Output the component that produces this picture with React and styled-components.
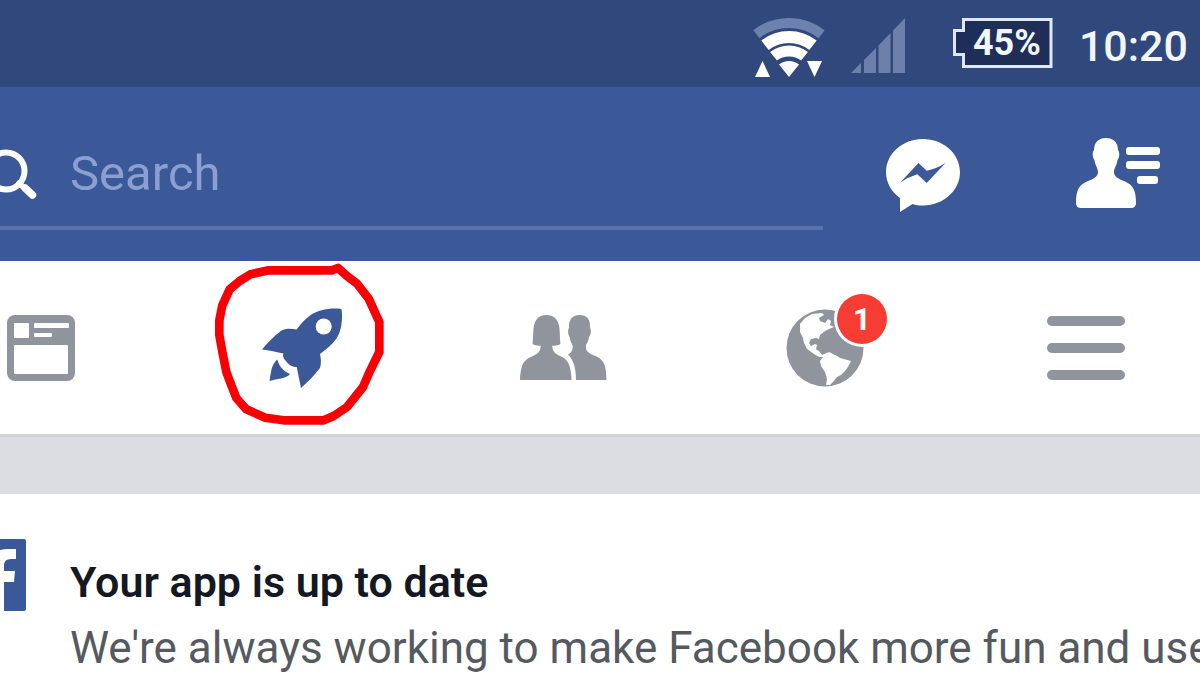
import React from 'react';
import styled, { createGlobalStyle } from 'styled-components';

const App = () => {
    return (
        <>
            <GlobalStyle />
            <Screen>
                <StatusBar>
                    <WifiIcon />
                    <SignalIcon />
                    <Battery>
                        <BatteryShape />
                        <BatteryText>45%</BatteryText>
                    </Battery>
                    <Clock>10:20</Clock>
                </StatusBar>
                <Header>
                    <SearchField>
                        <SearchIcon />
                        <SearchInput type='search' aria-label='Search' placeholder='Search' />
                    </SearchField>
                    <MessengerButton type='button' aria-label='Messenger'>
                        <MessengerIcon />
                    </MessengerButton>
                    <ContactsButton type='button' aria-label='Contacts'>
                        <ContactsIcon />
                    </ContactsButton>
                </Header>
                <Tabs>
                    <Tab type='button' aria-label='News feed'>
                        <FeedIcon />
                    </Tab>
                    <Tab type='button' aria-label='Discover' $active>
                        <RocketIcon />
                        <Marker />
                    </Tab>
                    <Tab type='button' aria-label='Friends'>
                        <FriendsIcon />
                    </Tab>
                    <Tab type='button' aria-label='Notifications'>
                        <BadgeHolder>
                            <GlobeIcon />
                            <Badge>1</Badge>
                        </BadgeHolder>
                    </Tab>
                    <Tab type='button' aria-label='Menu'>
                        <MenuIcon />
                    </Tab>
                </Tabs>
                <Divider />
                <Card>
                    <Logo />
                    <CardBody>
                        <CardTitle>Your app is up to date</CardTitle>
                        <CardText>We're always working to make Facebook more fun and use</CardText>
                    </CardBody>
                </Card>
            </Screen>
        </>
    );
};

const WifiIcon = () => (
    <Icon width='72' height='62' viewBox='0 -2 72 62' fill='#fff'>
        <path d='M3.4 17.2A53 53 0 0 1 68.6 17.2' fill='none' stroke='#6d81ae' strokeWidth='10' />
        <path d='M12 28.3A39 39 0 0 1 60 28.3' fill='none' stroke='#fff' strokeWidth='12' />
        <path d='M20.500 39.300A25 25 0 0 1 51.500 39.300' fill='none' stroke='#fff' strokeWidth='11' />
        <path d='M36 60L26 47.500A16 16 0 0 1 46 47.500Z' />
        <path d='M2 60L9.500 44L17 60Z' />
        <path d='M54 44H69L61.500 60Z' />
    </Icon>
);

const SignalIcon = () => (
    <Icon width='54' height='62' viewBox='0 -3 54 62' fill='#6d80ab'>
        <path d='M0 55L10 45V55ZM13 42L25 30V55H13ZM27.500 27.500L39.500 15V55H27.500ZM42 12.500L54 0V55H42Z' />
    </Icon>
);

const BatteryShape = () => (
    <BatterySvg width='100' height='52' viewBox='0 0 100 52' aria-hidden='true'>
        <path d='M10.500 2.500H98V49.500H10.500V37.500H1.500V13.500H10.500Z' fill='#1e2e58' stroke='#dfe8fb' strokeWidth='3' />
    </BatterySvg>
);

const SearchIcon = () => (
    <Icon width='38' height='52' viewBox='0 0 38 52' fill='none' stroke='#fff' strokeLinecap='round'>
        <circle cx='6' cy='23' r='18.500' strokeWidth='6' />
        <path d='M19 35.500L24 39.500' strokeWidth='6' />
        <path d='M25 40L32.500 47' strokeWidth='7.500' />
    </Icon>
);

const MessengerIcon = () => (
    <Icon width='74' height='78' viewBox='0 -4 74 78'>
        <path
            d='M37 0C57.400 0 74 14.800 74 33C74 51.300 57.400 66.500 37 66.500C33 66.500 29.600 66 26.500 65L14 73V59C5.400 52.900 0 43.600 0 33C0 14.800 16.600 0 37 0Z'
            fill='#fff'
        />
        <path d='M14.300 43.500L32.500 24L40.700 31.700Q50 30 59.500 24L40.700 44L31.300 35.200Q22 38 14.300 43.500Z' fill='#3b5998' />
    </Icon>
);

const ContactsIcon = () => (
    <Icon width='84' height='72' viewBox='0 0 84 72' fill='#fff'>
        <path d='M30 0C37 0 42 4 42 12C44 14 43.500 20 41.500 22C41 27 38 30 38 34C38 39 43 41 49 43.500C57 47 60 52 60 65Q60 70 55 70H5Q0 70 0 65C0 52 3 47 11 43.500C17 41 22 39 22 34C22 30 19 27 18.500 22C16.500 20 16 14 18 12C18 4 23 0 30 0Z' />
        <rect x='50' y='9' width='34' height='8' rx='3' />
        <rect x='50' y='23' width='34' height='8' rx='3' />
        <rect x='61' y='38' width='21' height='8' rx='3' />
    </Icon>
);

const FeedIcon = () => (
    <Icon width='68' height='66' viewBox='0 0 68 66' fill='currentColor'>
        <rect width='68' height='66' rx='8' />
        <g fill='#fff'>
            <rect x='7' y='8' width='15' height='15' rx='1' />
            <rect x='27' y='8' width='35' height='5' rx='1' />
            <rect x='27' y='18' width='18' height='4' rx='1' />
            <rect x='7' y='30' width='54' height='29' rx='1' />
        </g>
    </Icon>
);

const RocketIcon = () => (
    <Icon width='84' height='84' viewBox='0 0 84 84' fill='currentColor'>
        <path d='M81.500 3C70 1.500 58 4 50 9.500C44.500 13.500 40 19 36.500 23.500C31 22.500 25 22.500 21.500 24.500C14 30 8 36.500 2 43.500C9 44.500 17 46 23.500 47.500C22.500 49 23 52 25 54C28.500 58.500 31.500 61 36.700 61L41 82C48 76 54.500 69 60 62C61.500 58 61 52 60 48C66 43.500 72 39 76.500 32.500C81.500 25 83 13 81.500 3Z' />
        <circle cx='63.700' cy='20.500' r='8' fill='#fff' />
        <path d='M17.300 53.500C19 60 23 65 30 68C26 73 17 72.500 9.500 75C11 67 11 59 17.300 53.500Z' />
    </Icon>
);

const FriendsIcon = () => (
    <Icon width='88' height='66' viewBox='0 0 88 66' fill='currentColor'>
        <path d='M27.500 0C36 0 40 6 40.500 14C41 20 41 26 41.500 29C39 30.500 36 31 33.500 30.500C33 35 35 38 40 40.500C46 43 49 46 50.500 51C52 56 52.500 61 52.500 65H1C1 61 1.500 56 3 51C4.500 46 9 43 15 40.500C20 38 22 35 21.500 30.500C19 31 16 30.500 13.500 29C14 26 14 20 14.500 14C15 6 19 0 27.500 0Z' />
        <path d='M60.500 0C68 0 71.500 4 71 13C72.500 15 72 20 70 22C69.500 26 68 28 67 30C66.500 35 68 37.500 74 40C83 43.500 87.500 47 87.500 65H57C57 55 55 45 49 39.500C53 37 54 35 53.500 30C52.500 28 51 26 50.700 22C49 20 48.500 15 50 13C49.500 5 53 0 60.500 0Z' />
    </Icon>
);

const GlobeIcon = () => (
    <Icon width='78' height='78' viewBox='0 0 78 78' fill='currentColor'>
        <circle cx='39' cy='39' r='38.500' />
        <path
            d='M14 15L19 9L26 5L36 4L38 6L33 9L34 12L39 14L42 10L45 12L44 16L48 18L43 20L39 22L34 26L33 30L30 29L25 30L23 34L25 37L29 35L31 36L30 40L34 43L36 46L43 43L51 47L54 49L65 52L62 58L59 62L55 66L51 68L47 73L44 76L40 76L41 70L39 63L35 57L34 52L37 48L33 48L28 45L21 40L18 34L17 29L14 23Z'
            fill='#fff'
        />
    </Icon>
);

const MenuIcon = () => (
    <Icon width='78' height='64' viewBox='0 0 78 64' fill='currentColor'>
        <rect width='78' height='10' rx='5' />
        <rect y='27' width='78' height='10' rx='5' />
        <rect y='54' width='78' height='10' rx='5' />
    </Icon>
);

const Marker = () => (
    <MarkerSvg width='200' height='180' viewBox='5 8 600 540' fill='none' aria-hidden='true'>
        <path
            d='M400 45H205L150 57L118 77L88 102L66 150L57 195V240L68 300L78 350L95 395L108 428L138 462L195 487L250 495H370L400 482L440 455L488 395L510 345L537 290V200L505 130L470 85L440 62L413 38L395 45'
            stroke='#f80004'
            strokeWidth='26'
            strokeLinejoin='round'
        />
    </MarkerSvg>
);

const Logo = () => (
    <Icon width='26' height='72' viewBox='0 0 26 72'>
        <path d='M0 0H24Q26 0 26 2V70Q26 72 24 72H0Z' fill='#3b5998' />
        <path d='M0 11Q4 10 8 10H16V20H11Q4 20 4 26V32H15L14 43H4V72H0Z' fill='#fff' />
    </Icon>
);

const GlobalStyle = createGlobalStyle`
    body {
        margin: 0;
        background-color: #fff;
        font-family: Roboto, 'Liberation Sans', sans-serif;
    }
    * {
        box-sizing: border-box;
    }
`;

const Screen = styled.main`
    min-height: 100vh;
    overflow: hidden;
`;

const Icon = styled.svg`
    display: block;
    flex-shrink: 0;
`;

const StatusBar = styled.div`
    display: flex;
    align-items: center;
    justify-content: flex-end;
    gap: 26px;
    height: 87px;
    padding: 5px 12px 0 0;
    background-color: #30487b;
    color: #f2f6ff;
    font-weight: 500;
`;

const Battery = styled.div`
    position: relative;
    display: flex;
    align-items: center;
    justify-content: center;
    width: 100px;
    height: 52px;
    margin: 0 0 6px 22px;
    padding-left: 8px;
`;

const BatterySvg = styled.svg`
    position: absolute;
    inset: 0;
`;

const BatteryText = styled.span`
    position: relative;
    font-size: 36px;
    font-weight: 700;
    line-height: 52px;
`;

const Clock = styled.time`
    font-size: 43px;
    line-height: 52px;
`;

const Header = styled.header`
    display: flex;
    align-items: center;
    height: 174px;
    padding-right: 40px;
    background-color: #3b5998;
`;

const SearchField = styled.div`
    display: flex;
    flex: 1;
    align-self: stretch;
    align-items: center;
    gap: 32px;
    margin-bottom: 31px;
    padding-top: 34px;
    border-bottom: 4px solid #5872ac;
`;

const SearchInput = styled.input`
    flex: 1;
    min-width: 0;
    padding: 0;
    border: none;
    outline: none;
    background: none;
    color: #fff;
    font-family: inherit;
    font-size: 49px;
    line-height: 60px;
    &::placeholder {
        color: #8b9fd0;
        opacity: 1;
    }
`;

const HeaderButton = styled.button`
    padding: 0;
    border: none;
    background: none;
    cursor: pointer;
`;

const MessengerButton = styled(HeaderButton)`
    margin-left: 63px;
`;

const ContactsButton = styled(HeaderButton)`
    margin-left: 116px;
`;

/* the first and last tab run past the edges of the screen */
const Tabs = styled.nav`
    display: grid;
    grid-template-columns: repeat(5, 1fr);
    height: 173px;
    margin: 0 -17px 0 -90px;
    background-color: #fff;
`;

const Tab = styled.button`
    position: relative;
    display: flex;
    align-items: center;
    justify-content: center;
    padding: 0;
    border: none;
    background: none;
    color: ${({ $active }) => ($active ? '#3b5998' : '#90949c')};
    cursor: pointer;
`;

const MarkerSvg = styled.svg`
    position: absolute;
    top: 50%;
    left: 50%;
    transform: translate(-50%, -50%);
`;

const BadgeHolder = styled.span`
    position: relative;
`;

const Badge = styled.span`
    position: absolute;
    top: -15px;
    left: 51px;
    width: 50px;
    height: 50px;
    border-radius: 50%;
    background-color: #f63c33;
    box-shadow: 0 0 0 3px #fff;
    color: #fff;
    font-family: Roboto, 'Liberation Sans', sans-serif;
    font-size: 32px;
    font-weight: 700;
    line-height: 50px;
    text-align: center;
`;

const Divider = styled.div`
    height: 60px;
    border-top: 3px solid #d2d3d8;
    background-color: #dcdde2;
`;

const Card = styled.article`
    display: flex;
    align-items: flex-start;
    gap: 44px;
    padding-top: 45px;
`;

const CardBody = styled.div`
    flex: 1;
    min-width: 0;
    padding-top: 10px;
    white-space: nowrap;
`;

const CardTitle = styled.h2`
    margin: 0;
    color: #141823;
    font-size: 43px;
    font-weight: 600;
    line-height: 66px;
`;

const CardText = styled.p`
    margin: 0;
    color: #555960;
    font-size: 44px;
    line-height: 66px;
`;

export default App;
